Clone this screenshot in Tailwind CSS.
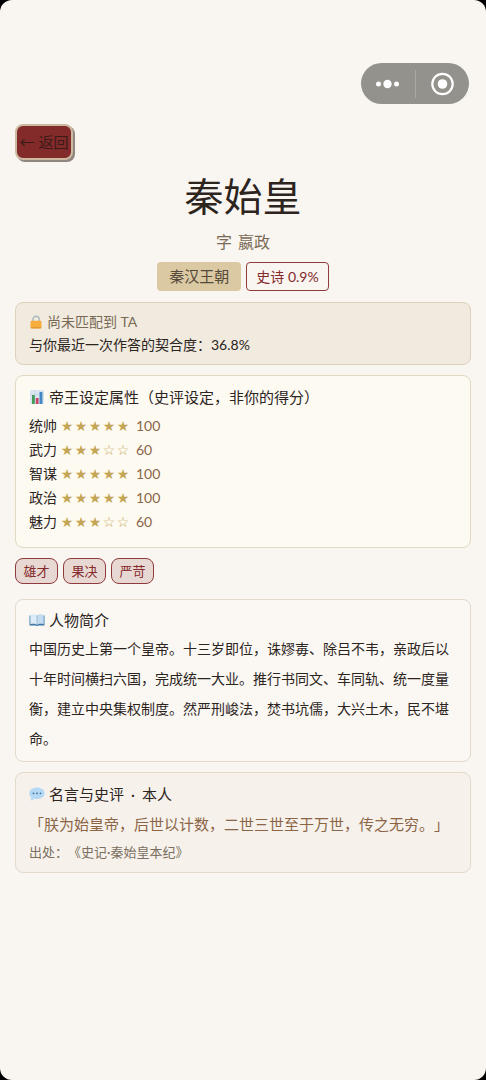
<!DOCTYPE html>
<html lang="zh-CN">
<head>
<meta charset="utf-8">
<meta name="viewport" content="width=device-width, initial-scale=1">
<title>秦始皇</title>
<script src="https://cdn.jsdelivr.net/npm/@tailwindcss/browser@4"></script>
</head>
<body class="bg-black font-['Lato','Noto_Sans_CJK_SC',sans-serif] text-[#2c241d] [text-spacing-trim:space-all]">
<div class="min-h-screen rounded-xl bg-[#f9f6f1] px-[15px] pb-10">
  <!-- Mini-program capsule -->
  <div class="flex justify-end pt-[63px] pr-0.5">
    <div class="flex h-[41px] w-[108px] items-center rounded-full bg-[#94928d]">
      <button type="button" aria-label="更多" class="flex flex-1 justify-center">
        <svg class="h-3 w-6" viewBox="0 0 24 12" fill="#fff"><circle cx="2.5" cy="6" r="2.5"/><circle cx="11.500" cy="6" r="4.200"/><circle cx="20.500" cy="6" r="2.500"/></svg>
      </button>
      <span class="h-7 w-px bg-[#aaa8a3]"></span>
      <button type="button" aria-label="关闭" class="flex flex-1 justify-center">
        <svg class="size-6" viewBox="0 0 24 24"><circle cx="12.500" cy="12" r="10.200" fill="none" stroke="#fff" stroke-width="2.200"/><circle cx="12.500" cy="12" r="4.800" fill="#fff"/></svg>
      </button>
    </div>
  </div>

  <button type="button" class="mt-5 flex h-9 w-[58px] items-center justify-center rounded-lg border-2 border-[#cdb99f] bg-[#832a2b] text-[15px] whitespace-nowrap text-[#3a1a17] shadow-[2px_2px_0_#8f8680]"><span class="mr-1 font-['Noto_Sans_CJK_SC']">←</span>返回</button>

  <header class="flex flex-col items-center">
    <h1 class="mt-3 text-[39px] leading-[48px]">秦始皇</h1>
    <p class="mt-2.5 flex gap-1.5 text-base leading-6 text-[#7a6a55]"><span>字</span><span>嬴政</span></p>
    <div class="mt-2 flex gap-[5px]">
      <span class="flex h-[29px] items-center rounded bg-[#dac9a3] px-3 text-[15px] text-[#55493a]">秦汉王朝</span>
      <span class="flex h-[29px] items-center rounded border border-[#8f3a3c] px-[9px] text-sm text-[#832a2b]">史诗 0.9%</span>
    </div>
  </header>

  <main>
    <section class="mt-[11px] rounded-lg border border-[#ded2bd] bg-[#f0eadf] px-[13px] pt-[7px] pb-2">
      <h2 class="flex items-center gap-1 text-sm leading-6 text-[#7a6a55]">
        <svg class="size-[14px]" viewBox="0 0 14 14"><path d="M4 7V4.500a3.200 3.200 0 0 1 6.400 0V7" fill="none" stroke="#aeb9bd" stroke-width="1.500"/><rect x="1.500" y="5.800" width="11" height="7.700" rx="1.300" fill="#f6ad3c"/><path d="M2 12.800h10" stroke="#e08f2d"/></svg>
        尚未匹配到 TA
      </h2>
      <p class="text-sm leading-[22px]">与你最近一次作答的契合度：36.8%</p>
    </section>

    <section class="mt-2.5 rounded-lg border border-[#e2d9c2] bg-[#fdfaf2] px-[13px] pt-[9px] pb-[13px]">
      <h2 class="flex items-center gap-1 text-[15px] leading-6">
        <svg class="h-4 w-4" viewBox="0 0 16 16"><rect x="1" y="1" width="14" height="14" rx="1" fill="#dbe5ef"/><path d="M1 5.500h14M1 10h14M6 1v14M10.500 1v14" stroke="#c3d3e4" stroke-width=".6"/><path d="M3 6h2.800v9H3z" fill="#459a5a"/><path d="M6.800 9h2.800v6H6.800z" fill="#cc4568"/><path d="M10.600 3h2.800v12h-2.800z" fill="#4387c2"/></svg>
        帝王设定属性（史评设定，非你的得分）
      </h2>
      <dl class="mt-[5px] text-sm leading-6">
        <div class="flex"><dt class="w-[31px]">统帅</dt><dd class="flex"><span class="grid w-[70px] grid-cols-5 text-center font-['DejaVu_Sans'] text-sm leading-6 text-[#c3a656]"><i class="not-italic">★</i><i class="not-italic">★</i><i class="not-italic">★</i><i class="not-italic">★</i><i class="not-italic">★</i></span><span class="ml-1.5 text-[#8b6546]">100</span></dd></div>
        <div class="flex"><dt class="w-[31px]">武力</dt><dd class="flex"><span class="grid w-[70px] grid-cols-5 text-center font-['DejaVu_Sans'] text-sm leading-6 text-[#c3a656]"><i class="not-italic">★</i><i class="not-italic">★</i><i class="not-italic">★</i><i class="not-italic">☆</i><i class="not-italic">☆</i></span><span class="ml-1.5 text-[#8b6546]">60</span></dd></div>
        <div class="flex"><dt class="w-[31px]">智谋</dt><dd class="flex"><span class="grid w-[70px] grid-cols-5 text-center font-['DejaVu_Sans'] text-sm leading-6 text-[#c3a656]"><i class="not-italic">★</i><i class="not-italic">★</i><i class="not-italic">★</i><i class="not-italic">★</i><i class="not-italic">★</i></span><span class="ml-1.5 text-[#8b6546]">100</span></dd></div>
        <div class="flex"><dt class="w-[31px]">政治</dt><dd class="flex"><span class="grid w-[70px] grid-cols-5 text-center font-['DejaVu_Sans'] text-sm leading-6 text-[#c3a656]"><i class="not-italic">★</i><i class="not-italic">★</i><i class="not-italic">★</i><i class="not-italic">★</i><i class="not-italic">★</i></span><span class="ml-1.5 text-[#8b6546]">100</span></dd></div>
        <div class="flex"><dt class="w-[31px]">魅力</dt><dd class="flex"><span class="grid w-[70px] grid-cols-5 text-center font-['DejaVu_Sans'] text-sm leading-6 text-[#c3a656]"><i class="not-italic">★</i><i class="not-italic">★</i><i class="not-italic">★</i><i class="not-italic">☆</i><i class="not-italic">☆</i></span><span class="ml-1.5 text-[#8b6546]">60</span></dd></div>
      </dl>
    </section>

    <ul class="mt-2.5 flex gap-[5px] text-[13px] leading-6 whitespace-nowrap text-[#832a2b]">
      <li class="min-w-[43px] rounded-lg border border-[#8f3a3c] bg-[#e8d8d3] px-[7px] text-center">雄才</li>
      <li class="min-w-[43px] rounded-lg border border-[#8f3a3c] bg-[#e8d8d3] px-[7px] text-center">果决</li>
      <li class="min-w-[43px] rounded-lg border border-[#8f3a3c] bg-[#e8d8d3] px-[7px] text-center">严苛</li>
    </ul>

    <section class="mt-[15px] rounded-lg border border-[#e2d9ca] bg-[#fbf8f3] px-[13px] pt-2 pb-[7px]">
      <h2 class="flex items-center gap-1 text-[15px] leading-6">
        <svg class="h-4 w-4" viewBox="0 0 16 16"><path d="M.5 3.500h15v10H9.200L8 14.200l-1.200-.7H.5z" fill="#3f78a8"/><path d="M1.300 2.800C3.500 2 6.500 2 8 3.500v9.300c-1.700-1.200-4.500-1.200-6.700-.6z" fill="#dcebf6"/><path d="M14.700 2.800C12.500 2 9.500 2 8 3.500v9.300c1.700-1.200 4.500-1.200 6.700-.6z" fill="#c3dcef"/><path d="M8 3.500v9.300" stroke="#8fb3cf" stroke-width=".8"/></svg>
        人物简介
      </h2>
      <p class="mt-0.5 text-sm leading-[30px]">中国历史上第一个皇帝。十三岁即位，诛嫪毐、除吕不韦，亲政后以十年时间横扫六国，完成统一大业。推行书同文、车同轨、统一度量衡，建立中央集权制度。然严刑峻法，焚书坑儒，大兴土木，民不堪命。</p>
    </section>

    <section class="mt-2.5 rounded-lg border border-[#e2d9ca] bg-[#f6f1eb] px-[13px] pt-[9px] pb-2">
      <h2 class="flex items-center gap-1 text-[15px] leading-6">
        <svg class="h-4 w-4" viewBox="0 0 16 16"><path d="M8 1.500c4.400 0 7.700 2.400 7.700 5.700S12.400 13 8 13c-1 0-1.900-.1-2.800-.3-1 1-2.400 1.700-3.900 1.700.7-.8 1-1.800 1-2.900C1 10.400.3 9 .3 7.200.3 3.900 3.600 1.500 8 1.500z" fill="#b5d9f5"/><g fill="#3e6d9c"><circle cx="4.500" cy="7.300" r=".9"/><circle cx="8" cy="7.300" r=".9"/><circle cx="11.500" cy="7.300" r=".9"/></g></svg>
        <span class="flex gap-[7px]"><span>名言与史评</span><span>·</span><span>本人</span></span>
      </h2>
      <blockquote class="mt-1.5 text-[15px] leading-6 whitespace-nowrap text-[#8b6546]">「朕为始皇帝，后世以计数，二世三世至于万世，传之无穷。」</blockquote>
      <p class="mt-1 text-[13px] leading-6 text-[#7a6f60]">出处：《史记·秦始皇本纪》</p>
    </section>
  </main>
</div>
</body>
</html>
